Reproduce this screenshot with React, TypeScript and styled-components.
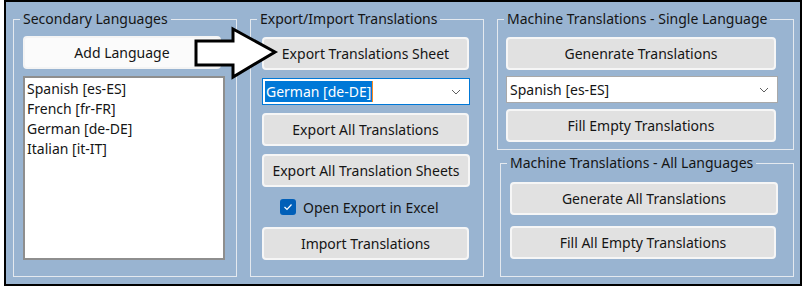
import styled, { createGlobalStyle } from "styled-components";

const GlobalStyle = createGlobalStyle`
  body {
    margin: 0;
    font-family: "Noto Sans", "Open Sans", sans-serif;
  }
`;

const Frame = styled.div`
  position: relative;
  box-sizing: border-box;
  margin-left: 4px;
  width: 798px;
  height: 286px;
  border: 2px solid #000;
  background: #99b4d1;
  display: grid;
  grid-template-columns: 224px 234px 297px;
  column-gap: 13px;
  padding: 7px 0 0 7px;
  font-size: 14px;
  color: #151515;
`;

const Column = styled.div`
  display: flex;
  flex-direction: column;
  gap: 3px;
`;

const Group = styled.fieldset<{ $height: number; $shift?: number }>`
  box-sizing: border-box;
  margin: 0 0 0 ${(p) => p.$shift ?? 0}px;
  padding: 0;
  min-width: 0;
  height: ${(p) => p.$height}px;
  border: 1px solid #e4e9ef;
`;

const Title = styled.legend`
  margin-left: 6px;
  padding: 0 3px;
  line-height: 20px;
  font-size: 14px;
`;

const Stack = styled.div<{ $gap: number; $top: number; $inset: number }>`
  display: flex;
  flex-direction: column;
  align-items: flex-start;
  gap: ${(p) => p.$gap}px;
  padding: ${(p) => p.$top}px 0 0 ${(p) => p.$inset}px;
`;

const Button = styled.button<{ $width: number; $light?: boolean }>`
  box-sizing: border-box;
  width: ${(p) => p.$width}px;
  height: 33px;
  border: 2px solid ${(p) => (p.$light ? "#f4f4f4" : "#f6f6f6")};
  border-radius: 4px;
  background: ${(p) => (p.$light ? "#fbfbfb" : "#e1e1e1")};
  font: inherit;
  font-size: 14px;
  color: #151515;
  padding: 0;
`;

const List = styled.div`
  box-sizing: border-box;
  width: 202px;
  height: 184px;
  background: #fff;
  border: 2px solid #8e8e8e;
  padding: 1px 2px;
`;

const ListItem = styled.div`
  line-height: 20px;
  font-size: 14px;
`;

const Combo = styled.div<{ $width: number; $focused?: boolean }>`
  box-sizing: border-box;
  width: ${(p) => p.$width}px;
  height: 27px;
  display: flex;
  align-items: center;
  justify-content: space-between;
  background: #fff;
  border: 1px solid ${(p) => (p.$focused ? "#0078d7" : "#a9a9a9")};
  padding: 0 8px 0 2px;
`;

const ComboText = styled.span<{ $selected?: boolean }>`
  line-height: 21px;
  padding: 0 1px;
  background: ${(p) => (p.$selected ? "#0078d7" : "transparent")};
  color: ${(p) => (p.$selected ? "#fff" : "#151515")};
  border-right: 1px solid ${(p) => (p.$selected ? "#ff8a1e" : "transparent")};
`;

const CheckRow = styled.label`
  display: flex;
  align-items: center;
  gap: 7px;
  height: 24px;
  padding-left: 18px;
`;

const CheckBox = styled.span`
  width: 16px;
  height: 16px;
  border-radius: 3px;
  background: #005fb8;
  display: flex;
  align-items: center;
  justify-content: center;
`;

const Arrow = styled.svg`
  position: absolute;
  left: 184px;
  top: 22px;
`;

const Chevron = () => (
  <svg width="10" height="6" viewBox="0 0 10 6">
    <polyline points="1,1 5,5 9,1" fill="none" stroke="#606060" strokeWidth="1" />
  </svg>
);

export default function App() {
  return (
    <>
      <GlobalStyle />
      <Frame>
        <Group $height={268}>
          <Title>Secondary Languages</Title>
          <Stack $gap={7} $top={7} $inset={9}>
            <Button $width={198} $light>
              Add Language
            </Button>
            <List>
              <ListItem>Spanish [es-ES]</ListItem>
              <ListItem>French [fr-FR]</ListItem>
              <ListItem>German [de-DE]</ListItem>
              <ListItem>Italian [it-IT]</ListItem>
            </List>
          </Stack>
        </Group>

        <Group $height={268}>
          <Title>Export/Import Translations</Title>
          <Stack $gap={8} $top={8} $inset={11}>
            <Button $width={207}>Export Translations Sheet</Button>
            <Combo $width={208} $focused>
              <ComboText $selected>German [de-DE]</ComboText>
              <Chevron />
            </Combo>
            <Button $width={207}>Export All Translations</Button>
            <Button $width={208}>Export All Translation Sheets</Button>
            <CheckRow>
              <CheckBox>
                <svg width="10" height="8" viewBox="0 0 10 8">
                  <polyline points="1.5,4 4,6.5 8.5,1.5" fill="none" stroke="#fff" strokeWidth="1.2" />
                </svg>
              </CheckBox>
              Open Export in Excel
            </CheckRow>
            <Button $width={207}>Import Translations</Button>
          </Stack>
        </Group>

        <Column>
          <Group $height={141}>
            <Title>Machine Translations - Single Language</Title>
            <Stack $gap={6} $top={8} $inset={8}>
              <Button $width={270}>Genenrate Translations</Button>
              <Combo $width={272}>
                <ComboText>Spanish [es-ES]</ComboText>
                <Chevron />
              </Combo>
              <Button $width={270}>Fill Empty Translations</Button>
            </Stack>
          </Group>
          <Group $height={124} $shift={3}>
            <Title>Machine Translations - All Languages</Title>
            <Stack $gap={11} $top={9} $inset={9}>
              <Button $width={268}>Generate All Translations</Button>
              <Button $width={266}>Fill All Empty Translations</Button>
            </Stack>
          </Group>
        </Column>

        <Arrow width="92" height="60" viewBox="0 0 92 60">
          <polygon
            points="6,17 43,17 43,5 85,28 43,53 43,41 6,41"
            fill="#fff"
            stroke="#000"
            strokeWidth="3"
            strokeLinejoin="miter"
          />
        </Arrow>
      </Frame>
    </>
  );
}
